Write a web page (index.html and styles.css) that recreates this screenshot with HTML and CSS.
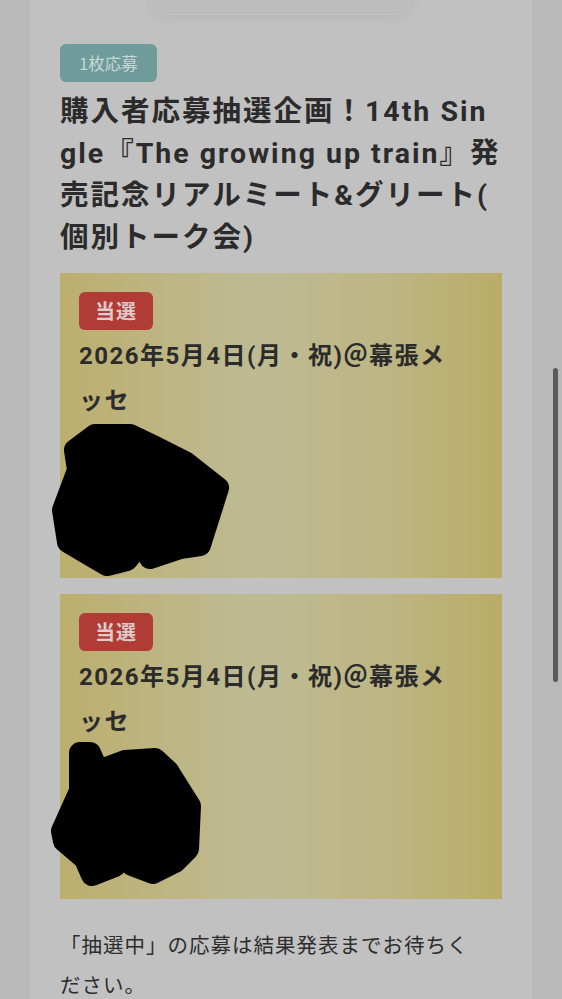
FILE: index.html
```html
<!doctype html>
<html lang="ja">
    <head>
        <meta charset="UTF-8" />
        <meta name="viewport" content="width=device-width, initial-scale=1.0" />
        <title>応募履歴</title>
        <link rel="stylesheet" href="styles.css">
    </head>
    <body>
        <div class="topbar"></div>
        <div class="card">
            <span class="tag">1枚応募</span>
            <h2 class="title">購入者応募抽選企画！14th Single『The growing up train』発売記念リアルミート&amp;グリート(個別トーク会)</h2>

            <div class="result">
                <span class="won">当選</span>
                <p class="date">2026年5月4日(月・祝)＠幕張メッセ</p>
                <div class="hidden">
                    <svg class="scribble" viewBox="0 0 200 170" width="200" height="170">
                        <path d="M25 30 L45 15 L80 15 L105 27 L135 42 L168 68 L150 125 L130 128 L100 138 L93 120 L77 140 L57 145 L45 138 L18 122 L13 90 L28 50 Z" />
                    </svg>
                </div>
            </div>

            <div class="result">
                <span class="won">当選</span>
                <p class="date">2026年5月4日(月・祝)＠幕張メッセ</p>
                <div class="hidden">
                    <svg class="scribble" viewBox="0 0 200 170" width="200" height="170">
                        <path d="M30 12 L40 12 L48 30 L75 20 L105 18 L118 30 L140 65 L138 108 L125 121 L103 132 L82 124 L73 110 L65 125 L42 134 L35 118 L14 100 L12 90 L30 50 Z" />
                    </svg>
                </div>
            </div>

            <p class="note">「抽選中」の応募は結果発表までお待ちください。</p>
        </div>
        <div class="scrollbar"></div>
    </body>
</html>
```

FILE: styles.css
```css
body {
    font-family: "Noto Sans CJK JP", "Noto Sans", sans-serif;
    background-color: #b9b9b9;
    margin: 0;
    padding: 0;
    color: #2b2b2b;
    overflow: hidden;
    height: 999px;
}

.topbar {
    position: absolute;
    top: -20px;
    left: 151px;
    width: 258px;
    height: 33px;
    background: #bdbdbd;
    border: 1px solid #c4c4c4;
    border-radius: 14px;
    box-shadow: 0 2px 12px rgba(0, 0, 0, 0.06);
}

.card {
    background: #c1c1c1;
    margin: 0 30px;
    padding: 44px 30px 0;
    height: 955px;
}

.tag {
    display: inline-block;
    background-color: #6f9c9a;
    color: #c6d7d5;
    font-size: 16.5px;
    line-height: 38px;
    height: 38px;
    padding: 0 19px;
    border-radius: 6px;
}

.title {
    font-family: Roboto, "Noto Sans CJK JP", sans-serif;
    font-size: 28.5px;
    font-weight: 700;
    line-height: 42px;
    letter-spacing: 2px;
    margin: 9px 0 14px;
    word-break: break-all;
    line-break: anywhere;
}

.result {
    position: relative;
    background: linear-gradient(90deg, #bcae6e 0%, #bebb94 45%, #bdb582 75%, #baac68 100%);
    padding: 19px 19px 0;
    margin-bottom: 16px;
}

.won {
    display: inline-block;
    background-color: #b03c35;
    color: #dccdcc;
    font-size: 20px;
    font-weight: 700;
    line-height: 38px;
    height: 38px;
    padding: 0 16px;
    border-radius: 6px;
    letter-spacing: 1px;
}

.date {
    font-family: Roboto, "Noto Sans CJK JP", sans-serif;
    font-size: 24px;
    font-weight: 700;
    line-height: 45px;
    letter-spacing: 1.5px;
    margin: 4px 0 0;
    max-width: 375px;
    line-break: anywhere;
}

.hidden {
    position: relative;
    height: 154px;
}

.scribble {
    position: absolute;
    left: -29px;
    top: -4px;
    overflow: visible;
}

.scribble path {
    fill: #000;
    stroke: #000;
    stroke-width: 22;
    stroke-linejoin: round;
}

.note {
    font-size: 20.5px;
    line-height: 40px;
    letter-spacing: 1px;
    margin: 25px 0 0;
    max-width: 428px;
    color: #2d2d2d;
}

.scrollbar {
    position: absolute;
    top: 368px;
    left: 553px;
    width: 5px;
    height: 314px;
    border-radius: 3px;
    background: #5c5c5c;
}
```
